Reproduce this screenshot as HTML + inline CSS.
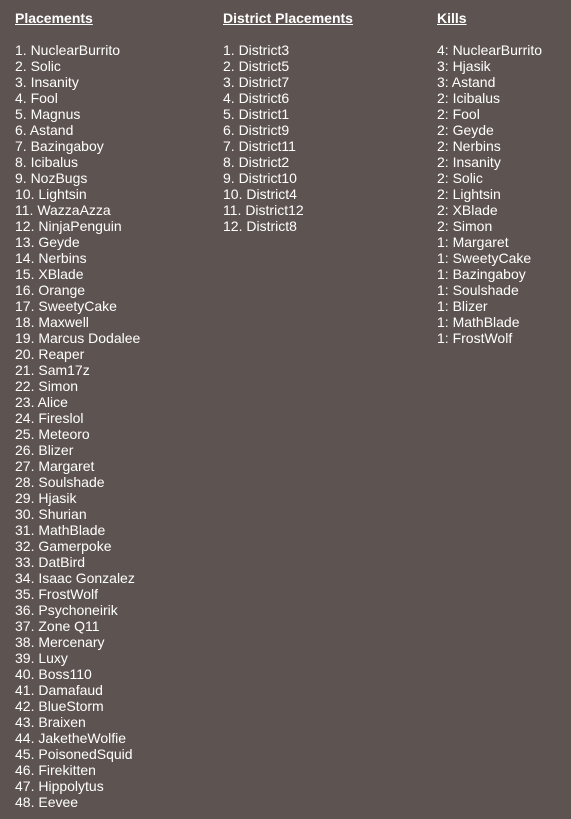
<!DOCTYPE html>
<html><head><meta charset="utf-8"><style>
html,body{margin:0;padding:0;background:#5d5351;width:571px;height:819px;overflow:hidden}
.c{position:absolute;top:10px;color:#fff;font-family:"Liberation Sans",Arial,sans-serif;font-size:14px;line-height:16px;white-space:nowrap}
.c b{text-decoration:underline}
</style></head><body>
<div class="c" style="left:15px"><b>Placements</b><br><br>1. NuclearBurrito<br>2. Solic<br>3. Insanity<br>4. Fool<br>5. Magnus<br>6. Astand<br>7. Bazingaboy<br>8. Icibalus<br>9. NozBugs<br>10. Lightsin<br>11. WazzaAzza<br>12. NinjaPenguin<br>13. Geyde<br>14. Nerbins<br>15. XBlade<br>16. Orange<br>17. SweetyCake<br>18. Maxwell<br>19. Marcus Dodalee<br>20. Reaper<br>21. Sam17z<br>22. Simon<br>23. Alice<br>24. Fireslol<br>25. Meteoro<br>26. Blizer<br>27. Margaret<br>28. Soulshade<br>29. Hjasik<br>30. Shurian<br>31. MathBlade<br>32. Gamerpoke<br>33. DatBird<br>34. Isaac Gonzalez<br>35. FrostWolf<br>36. Psychoneirik<br>37. Zone Q11<br>38. Mercenary<br>39. Luxy<br>40. Boss110<br>41. Damafaud<br>42. BlueStorm<br>43. Braixen<br>44. JaketheWolfie<br>45. PoisonedSquid<br>46. Firekitten<br>47. Hippolytus<br>48. Eevee</div>
<div class="c" style="left:223px"><b>District Placements</b><br><br>1. District3<br>2. District5<br>3. District7<br>4. District6<br>5. District1<br>6. District9<br>7. District11<br>8. District2<br>9. District10<br>10. District4<br>11. District12<br>12. District8</div>
<div class="c" style="left:437px"><b>Kills</b><br><br>4: NuclearBurrito<br>3: Hjasik<br>3: Astand<br>2: Icibalus<br>2: Fool<br>2: Geyde<br>2: Nerbins<br>2: Insanity<br>2: Solic<br>2: Lightsin<br>2: XBlade<br>2: Simon<br>1: Margaret<br>1: SweetyCake<br>1: Bazingaboy<br>1: Soulshade<br>1: Blizer<br>1: MathBlade<br>1: FrostWolf</div>
</body></html>
